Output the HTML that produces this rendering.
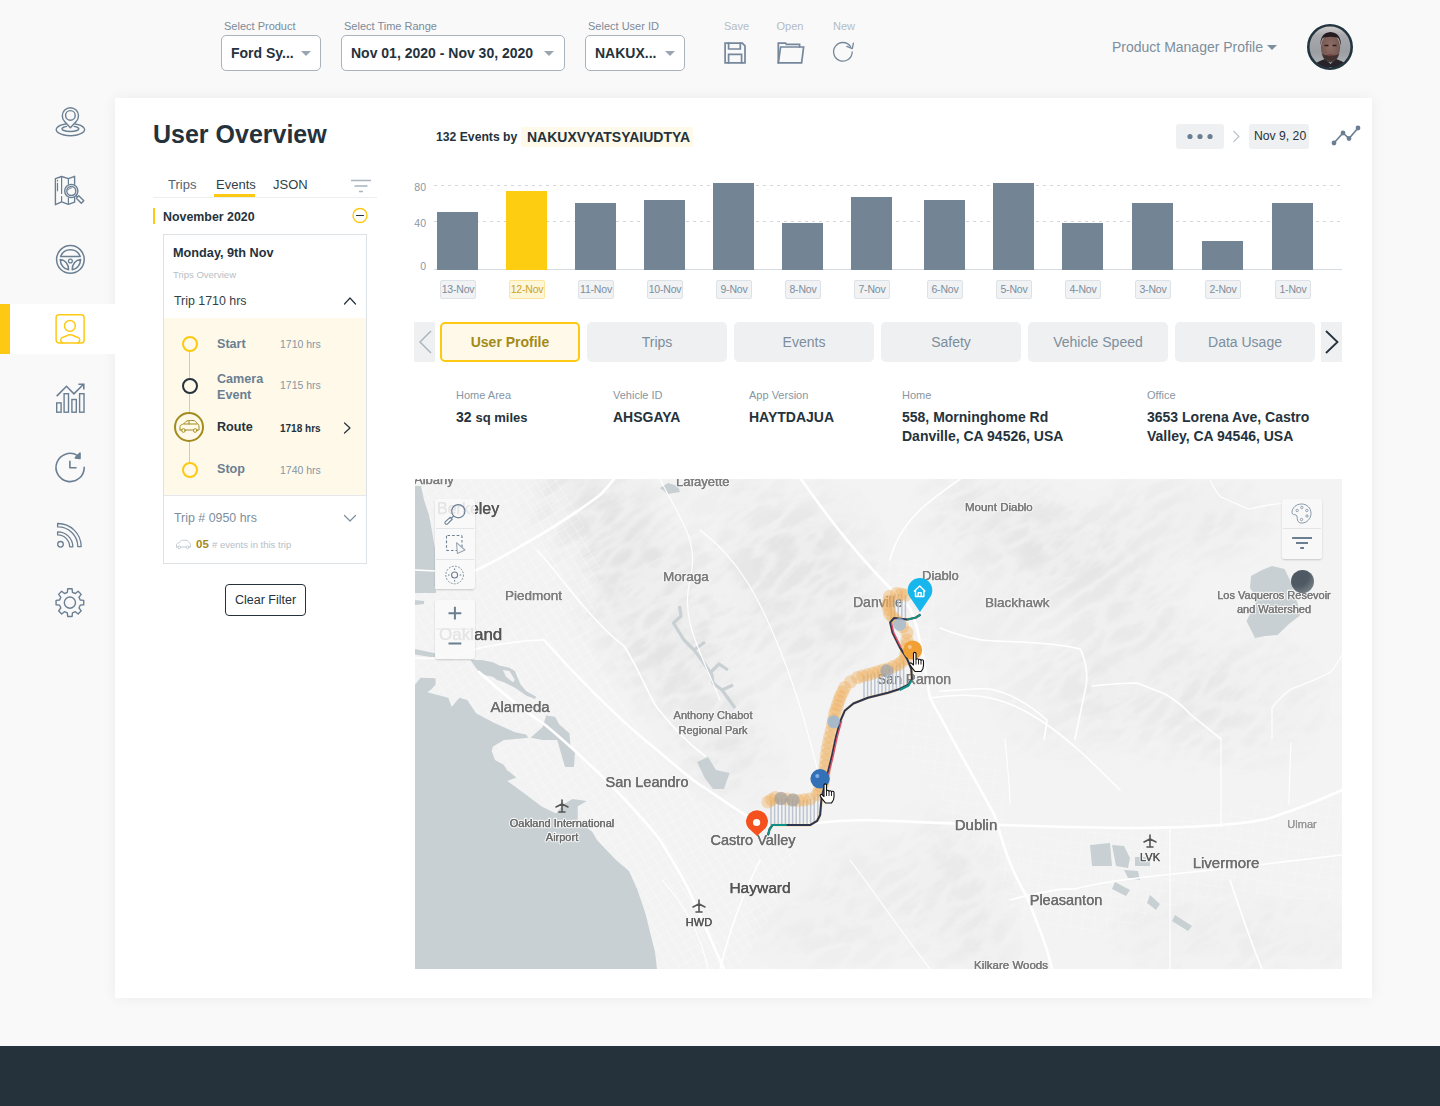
<!DOCTYPE html>
<html><head><meta charset="utf-8">
<style>
*{box-sizing:border-box;margin:0;padding:0}
html,body{width:1440px;height:1106px;overflow:hidden;background:#f9f9f9;font-family:"Liberation Sans",sans-serif;color:#25323c}
.a{position:absolute}
.t{position:absolute;line-height:1;white-space:nowrap}
.b{font-weight:bold}
#card{position:absolute;left:115px;top:98px;width:1257px;height:900px;background:#fff;box-shadow:0 0 14px rgba(0,0,0,0.06)}
#footer{position:absolute;left:0;top:1046px;width:1440px;height:60px;background:#25313b}
.sel{position:absolute;top:35px;height:36px;border:1px solid #a9b3bc;border-radius:5px;background:#fff}
.lbl{font-size:11px;color:#7d8a97}
.caret{position:absolute;width:0;height:0;border-left:5px solid transparent;border-right:5px solid transparent;border-top:5px solid #9aa5b0}
.bar{position:absolute;width:41px;background:#738494}
.xl{position:absolute;top:280px;height:19px;white-space:nowrap;overflow:visible;letter-spacing:-0.2px;border:1px solid #dde2e6;background:#f0f2f4;border-radius:2px;font-size:10.5px;color:#7d8e9c;text-align:center;line-height:17px}
.tab{position:absolute;top:322px;width:140px;height:40px;background:#eef0f2;border-radius:5px;font-size:14px;color:#7d8e9c;text-align:center;line-height:40px}
.il{font-size:11px;color:#8696a4}
.iv{font-size:14px;font-weight:bold;color:#25323c}
.ml{position:absolute;line-height:1;white-space:nowrap;color:#757575;font-family:"Liberation Sans",sans-serif}
</style></head><body>

<!-- HEADER -->
<div class="t lbl" style="left:224px;top:21px">Select Product</div>
<div class="sel" style="left:221px;width:100px"></div>
<div class="t b" style="left:231px;top:46px;font-size:14px">Ford Sy...</div>
<div class="caret" style="left:301px;top:51px"></div>

<div class="t lbl" style="left:344px;top:21px">Select Time Range</div>
<div class="sel" style="left:341px;width:224px"></div>
<div class="t b" style="left:351px;top:46px;font-size:14px">Nov 01, 2020 - Nov 30, 2020</div>
<div class="caret" style="left:544px;top:51px"></div>

<div class="t lbl" style="left:588px;top:21px">Select User ID</div>
<div class="sel" style="left:585px;width:100px"></div>
<div class="t b" style="left:595px;top:46px;font-size:14px">NAKUX...</div>
<div class="caret" style="left:665px;top:51px"></div>

<div class="t lbl" style="left:724px;top:21px;color:#b4bcc4;width:22px;text-align:center">Save</div>
<div class="t lbl" style="left:776px;top:21px;color:#b4bcc4;width:28px;text-align:center">Open</div>
<div class="t lbl" style="left:833px;top:21px;color:#b4bcc4;width:21px;text-align:center">New</div>

<div class="t" style="left:1112px;top:40px;font-size:14px;color:#7d8e9c">Product Manager Profile</div>
<div class="caret" style="left:1267px;top:45px;border-top-color:#7d8e9c"></div>


<svg class="a" style="left:1307px;top:24px" width="46" height="46" viewBox="0 0 46 46">
 <defs><clipPath id="avc"><circle cx="23" cy="23" r="21"/></clipPath>
 <linearGradient id="avbg" x1="0" y1="0" x2="0" y2="1"><stop offset="0" stop-color="#d9d5d2"/><stop offset="0.25" stop-color="#a8a9ad"/><stop offset="0.6" stop-color="#9b9ea3"/><stop offset="1" stop-color="#b5b7ba"/></linearGradient>
 <radialGradient id="avface" cx="0.5" cy="0.45" r="0.6"><stop offset="0" stop-color="#8f6f66"/><stop offset="0.7" stop-color="#7a5c55"/><stop offset="1" stop-color="#5a4440"/></radialGradient></defs>
 <g clip-path="url(#avc)">
  <rect width="46" height="46" fill="url(#avbg)"/>
  <path d="M4,46 L6,41 C10,38 15,36 18,35 L23.5,40 L29,35 C32,36 37,38 41,41 L43,46 Z" fill="#26242a"/>
  <path d="M19,46 L23.5,43 L28,46 Z" fill="#d8d8dc"/>
  <ellipse cx="23.5" cy="23.5" rx="9.6" ry="13" fill="url(#avface)"/>
  <path d="M14.5,29 C16,35 19,38 23.5,38.5 C28,38 31,35 32.5,29 C31,31 29,31.5 27,31 C25,30.5 22,30.5 20,31 C18,31.5 16,31 14.5,29 Z" fill="#3a2a28" opacity="0.85"/>
  <path d="M13.5,22 C13,14 16,8.5 23.5,8 C31,8.5 34.5,14 33.8,22 C33,17 32,14 30,13.5 C26,12.5 21,12.5 17,13.5 C15,14 14,17 13.5,22 Z" fill="#241c1e"/>
  <path d="M17.5,21.5 H21.5 M25.5,21.5 H29.5" stroke="#2a1e1e" stroke-width="1.4"/>
  <path d="M20.5,31.5 C22,30.8 25,30.8 26.5,31.5" stroke="#7a4a48" stroke-width="1.2" fill="none"/>
 </g>
 <circle cx="23" cy="23" r="21.7" fill="none" stroke="#22343e" stroke-width="2.6"/>
</svg>

<!-- SIDEBAR active -->
<div class="a" style="left:0;top:304px;width:116px;height:50px;background:#fff;z-index:2"></div>
<div class="a" style="left:0;top:304px;width:10px;height:50px;background:#fdc912;z-index:2"></div>

<div id="card"></div>
<div id="footer"></div>



<!-- CHART -->
<div class="t b" style="left:436px;top:131px;font-size:12.2px;color:#25323c">132 Events by</div>
<div class="a" style="left:521px;top:127px;width:172px;height:20px;background:#fef9e8;border-radius:2px"></div>
<div class="t b" style="left:527px;top:130px;font-size:14px;color:#25323c">NAKUXVYATSYAIUDTYA</div>
<div class="a" style="left:1176px;top:124px;width:48px;height:25px;background:#eef0f2;border-radius:3px"></div>
<div class="a" style="left:1249px;top:124px;width:60px;height:25px;background:#eef0f2;border-radius:3px"></div>
<div class="t" style="left:1254px;top:130px;font-size:12.2px;color:#25323c">Nov 9, 20</div>
<svg class="a" style="left:0;top:0" width="1440" height="320"><path d="M434,185.5 H1342 M434,221.5 H1342" stroke="#d3d8dc" stroke-width="1" stroke-dasharray="3,4"/><path d="M434,269.5 H1342" stroke="#d6dbe0" stroke-width="1"/><g fill="#6b7f93"><circle cx="1190" cy="136.5" r="2.6"/><circle cx="1200" cy="136.5" r="2.6"/><circle cx="1210" cy="136.5" r="2.6"/></g><path d="M1233.5,131 L1239,136.5 L1233.5,142" stroke="#b9c2c9" stroke-width="1.1" fill="none"/><g stroke="#6b7f93" stroke-width="1.6" fill="#6b7f93"><path d="M1334,143 L1343,133 L1349,138.5 L1358,128" fill="none"/><circle cx="1334" cy="143" r="1.6"/><circle cx="1343" cy="133" r="1.6"/><circle cx="1349" cy="138.5" r="1.6"/><circle cx="1358" cy="128" r="1.6"/></g></svg>
<div class="t" style="left:408px;top:181.5px;width:18px;text-align:right;font-size:10.5px;color:#8a98a6">80</div>
<div class="t" style="left:408px;top:218px;width:18px;text-align:right;font-size:10.5px;color:#8a98a6">40</div>
<div class="t" style="left:408px;top:260.5px;width:18px;text-align:right;font-size:10.5px;color:#8a98a6">0</div>
<div class="bar" style="left:437px;top:212.3px;height:57.69999999999999px;background:#738494"></div>
<div class="xl" style="left:440px;width:36px">13-Nov</div>
<div class="bar" style="left:506px;top:191px;height:79px;background:#fdcd12"></div>
<div class="xl" style="left:509px;width:36px;background:#fef6d8;border-color:#fde59a;color:#c9a52a">12-Nov</div>
<div class="bar" style="left:575px;top:202.5px;height:67.5px;background:#738494"></div>
<div class="xl" style="left:578px;width:36px">11-Nov</div>
<div class="bar" style="left:644px;top:199.8px;height:70.19999999999999px;background:#738494"></div>
<div class="xl" style="left:647px;width:36px">10-Nov</div>
<div class="bar" style="left:713px;top:182.9px;height:87.1px;background:#738494"></div>
<div class="xl" style="left:716px;width:36px">9-Nov</div>
<div class="bar" style="left:782px;top:222.7px;height:47.30000000000001px;background:#738494"></div>
<div class="xl" style="left:785px;width:36px">8-Nov</div>
<div class="bar" style="left:851px;top:197.2px;height:72.80000000000001px;background:#738494"></div>
<div class="xl" style="left:854px;width:36px">7-Nov</div>
<div class="bar" style="left:924px;top:200px;height:70px;background:#738494"></div>
<div class="xl" style="left:927px;width:36px">6-Nov</div>
<div class="bar" style="left:993px;top:183.1px;height:86.9px;background:#738494"></div>
<div class="xl" style="left:996px;width:36px">5-Nov</div>
<div class="bar" style="left:1062px;top:222.9px;height:47.099999999999994px;background:#738494"></div>
<div class="xl" style="left:1065px;width:36px">4-Nov</div>
<div class="bar" style="left:1132px;top:202.8px;height:67.19999999999999px;background:#738494"></div>
<div class="xl" style="left:1135px;width:36px">3-Nov</div>
<div class="bar" style="left:1202px;top:241px;height:29px;background:#738494"></div>
<div class="xl" style="left:1205px;width:36px">2-Nov</div>
<div class="bar" style="left:1272px;top:202.8px;height:67.19999999999999px;background:#738494"></div>
<div class="xl" style="left:1275px;width:36px">1-Nov</div>
<!-- TABS -->
<div class="a" style="left:414px;top:322px;width:21px;height:40px;background:#eef0f2"></div>
<div class="a" style="left:1321px;top:322px;width:21px;height:40px;background:#eef0f2"></div>
<div class="tab b" style="left:440px;background:#fef9e8;border:2px solid #fdc912;line-height:36px;color:#a38a1a">User Profile</div>
<div class="tab" style="left:587px">Trips</div>
<div class="tab" style="left:734px">Events</div>
<div class="tab" style="left:881px">Safety</div>
<div class="tab" style="left:1028px">Vehicle Speed</div>
<div class="tab" style="left:1175px">Data Usage</div>
<svg class="a" style="left:0;top:0" width="1440" height="400" fill="none"><path d="M431,331 L420,342 L431,353" stroke="#aab5be" stroke-width="1.5"/><path d="M1326,331 L1337.5,342 L1326,353" stroke="#25323c" stroke-width="1.8"/></svg>
<!-- INFO -->
<div class="t il" style="left:456px;top:390px">Home Area</div>
<div class="t iv" style="left:456px;top:408px;line-height:19px">32 <span style="font-size:13px">sq miles</span></div>
<div class="t il" style="left:613px;top:390px">Vehicle ID</div>
<div class="t iv" style="left:613px;top:408px;line-height:19px">AHSGAYA</div>
<div class="t il" style="left:749px;top:390px">App Version</div>
<div class="t iv" style="left:749px;top:408px;line-height:19px">HAYTDAJUA</div>
<div class="t il" style="left:902px;top:390px">Home</div>
<div class="t iv" style="left:902px;top:408px;line-height:19px">558, Morninghome Rd<br>Danville, CA 94526, USA</div>
<div class="t il" style="left:1147px;top:390px">Office</div>
<div class="t iv" style="left:1147px;top:408px;line-height:19px">3653 Lorena Ave, Castro<br>Valley, CA 94546, USA</div>
<svg class="a" style="left:415px;top:479px" width="927" height="490" viewBox="415 479 927 490">
<defs><filter id="bl" x="-50%" y="-50%" width="200%" height="200%"><feGaussianBlur stdDeviation="18"/></filter><filter id="tex" x="0" y="0" width="100%" height="100%"><feTurbulence type="turbulence" baseFrequency="0.025 0.06" numOctaves="3" seed="11" result="n"/><feColorMatrix in="n" type="matrix" values="0 0 0 0 0  0 0 0 0 0  0 0 0 0 0  0 0 0 2.6 -0.35"/></filter><mask id="hm"><rect x="415" y="479" width="927" height="490" fill="#000"/><g filter="url(#bl)"><ellipse cx="600" cy="520" rx="84.0" ry="48.0" transform="rotate(35 600 520)" fill="#fff" opacity="0.63"/><ellipse cx="650" cy="600" rx="72.0" ry="108.0" transform="rotate(-30 650 600)" fill="#fff" opacity="0.72"/><ellipse cx="700" cy="690" rx="60.0" ry="84.0" transform="rotate(-30 700 690)" fill="#fff" opacity="0.54"/><ellipse cx="735" cy="760" rx="48.0" ry="48.0" transform="rotate(0 735 760)" fill="#fff" opacity="0.45"/><ellipse cx="800" cy="600" rx="72.0" ry="96.0" transform="rotate(-35 800 600)" fill="#fff" opacity="0.63"/><ellipse cx="830" cy="540" rx="48.0" ry="60.0" transform="rotate(-35 830 540)" fill="#fff" opacity="0.45"/><ellipse cx="760" cy="540" rx="60.0" ry="60.0" transform="rotate(0 760 540)" fill="#fff" opacity="0.36"/><ellipse cx="1020" cy="530" rx="108.0" ry="54.0" transform="rotate(20 1020 530)" fill="#fff" opacity="0.63"/><ellipse cx="1100" cy="580" rx="96.0" ry="48.0" transform="rotate(25 1100 580)" fill="#fff" opacity="0.54"/><ellipse cx="1180" cy="520" rx="96.0" ry="48.0" transform="rotate(0 1180 520)" fill="#fff" opacity="0.45"/><ellipse cx="980" cy="620" rx="72.0" ry="48.0" transform="rotate(0 980 620)" fill="#fff" opacity="0.27"/><ellipse cx="1150" cy="680" rx="108.0" ry="72.0" transform="rotate(20 1150 680)" fill="#fff" opacity="0.45"/><ellipse cx="1250" cy="700" rx="84.0" ry="72.0" transform="rotate(0 1250 700)" fill="#fff" opacity="0.36"/><ellipse cx="1060" cy="700" rx="72.0" ry="60.0" transform="rotate(0 1060 700)" fill="#fff" opacity="0.32"/><ellipse cx="960" cy="900" rx="48.0" ry="96.0" transform="rotate(-20 960 900)" fill="#fff" opacity="0.54"/><ellipse cx="870" cy="900" rx="60.0" ry="72.0" transform="rotate(0 870 900)" fill="#fff" opacity="0.36"/><ellipse cx="800" cy="930" rx="48.0" ry="48.0" transform="rotate(0 800 930)" fill="#fff" opacity="0.32"/><ellipse cx="1200" cy="930" rx="96.0" ry="48.0" transform="rotate(0 1200 930)" fill="#fff" opacity="0.32"/><ellipse cx="1300" cy="940" rx="72.0" ry="36.0" transform="rotate(0 1300 940)" fill="#fff" opacity="0.27"/><ellipse cx="590" cy="480" rx="60.0" ry="24.0" transform="rotate(0 590 480)" fill="#fff" opacity="0.45"/><ellipse cx="720" cy="480" rx="72.0" ry="24.0" transform="rotate(0 720 480)" fill="#fff" opacity="0.36"/></g></mask><pattern id="grid" width="9" height="9" patternUnits="userSpaceOnUse" patternTransform="rotate(-32)"><path d="M0,0 H9 M0,0 V9" stroke="#fff" stroke-width="1.2"/></pattern><pattern id="grid2" width="12" height="12" patternUnits="userSpaceOnUse" patternTransform="rotate(8)"><path d="M0,0 H12 M0,0 V12" stroke="#fff" stroke-width="1"/></pattern></defs>
<rect x="415" y="479" width="927" height="490" fill="#f3f3f3"/>
<g filter="url(#bl)">
<ellipse cx="600" cy="520" rx="70" ry="40" transform="rotate(35 600 520)" fill="#000" opacity="0.014"/>
<ellipse cx="650" cy="600" rx="60" ry="90" transform="rotate(-30 650 600)" fill="#000" opacity="0.016"/>
<ellipse cx="700" cy="690" rx="50" ry="70" transform="rotate(-30 700 690)" fill="#000" opacity="0.012"/>
<ellipse cx="735" cy="760" rx="40" ry="40" transform="rotate(0 735 760)" fill="#000" opacity="0.010"/>
<ellipse cx="800" cy="600" rx="60" ry="80" transform="rotate(-35 800 600)" fill="#000" opacity="0.014"/>
<ellipse cx="830" cy="540" rx="40" ry="50" transform="rotate(-35 830 540)" fill="#000" opacity="0.010"/>
<ellipse cx="760" cy="540" rx="50" ry="50" transform="rotate(0 760 540)" fill="#000" opacity="0.008"/>
<ellipse cx="1020" cy="530" rx="90" ry="45" transform="rotate(20 1020 530)" fill="#000" opacity="0.014"/>
<ellipse cx="1100" cy="580" rx="80" ry="40" transform="rotate(25 1100 580)" fill="#000" opacity="0.012"/>
<ellipse cx="1180" cy="520" rx="80" ry="40" transform="rotate(0 1180 520)" fill="#000" opacity="0.010"/>
<ellipse cx="980" cy="620" rx="60" ry="40" transform="rotate(0 980 620)" fill="#000" opacity="0.006"/>
<ellipse cx="1150" cy="680" rx="90" ry="60" transform="rotate(20 1150 680)" fill="#000" opacity="0.010"/>
<ellipse cx="1250" cy="700" rx="70" ry="60" transform="rotate(0 1250 700)" fill="#000" opacity="0.008"/>
<ellipse cx="1060" cy="700" rx="60" ry="50" transform="rotate(0 1060 700)" fill="#000" opacity="0.007"/>
<ellipse cx="960" cy="900" rx="40" ry="80" transform="rotate(-20 960 900)" fill="#000" opacity="0.012"/>
<ellipse cx="870" cy="900" rx="50" ry="60" transform="rotate(0 870 900)" fill="#000" opacity="0.008"/>
<ellipse cx="800" cy="930" rx="40" ry="40" transform="rotate(0 800 930)" fill="#000" opacity="0.007"/>
<ellipse cx="1200" cy="930" rx="80" ry="40" transform="rotate(0 1200 930)" fill="#000" opacity="0.007"/>
<ellipse cx="1300" cy="940" rx="60" ry="30" transform="rotate(0 1300 940)" fill="#000" opacity="0.006"/>
<ellipse cx="590" cy="480" rx="50" ry="20" transform="rotate(0 590 480)" fill="#000" opacity="0.010"/>
<ellipse cx="720" cy="480" rx="60" ry="20" transform="rotate(0 720 480)" fill="#000" opacity="0.008"/>
</g>
<g mask="url(#hm)" opacity="0.045"><g transform="rotate(-35 878 724)"><rect x="250" y="150" width="1260" height="1150" filter="url(#tex)"/></g></g>
<path d="M415.0,479.0 L560.0,479.0 L600.0,560.0 L590.0,640.0 L620.0,700.0 L660.0,760.0 L700.0,800.0 L760.0,820.0 L800.0,850.0 L780.0,900.0 L740.0,969.0 L657.0,969.0 L640.0,900.0 L600.0,850.0 L540.0,800.0 L480.0,740.0 L415.0,690.0Z" fill="url(#grid)" opacity="0.55"/>
<path d="M870.0,560.0 L930.0,560.0 L940.0,640.0 L930.0,690.0 L1000.0,760.0 L1010.0,840.0 L1100.0,830.0 L1342.0,790.0 L1342.0,900.0 L1200.0,900.0 L1100.0,940.0 L1020.0,930.0 L990.0,860.0 L920.0,780.0 L880.0,720.0 L900.0,640.0Z" fill="url(#grid2)" opacity="0.45"/>
<path d="M415.0,684.4 L420.6,677.8 L435.6,678.3 L435.6,684.4 L431.7,688.9 L427.2,692.2 L448.3,697.8 L451.7,706.7 L459.4,697.8 L467.2,700.0 L476.1,713.3 L492.8,722.2 L515.0,732.2 L526.1,734.4 L528.3,737.8 L503.9,740.0 L492.8,746.7 L491.7,751.1 L495.0,760.0 L503.6,764.8 L507.2,770.2 L516.3,777.4 L507.2,781.0 L512.6,784.7 L527.1,795.5 L541.6,806.4 L556.0,813.6 L563.3,804.6 L572.3,799.1 L586.8,801.0 L577.7,806.4 L577.7,820.8 L592.2,831.7 L597.0,840.0 L616.0,860.0 L629.0,871.0 L637.5,890.0 L645.6,914.0 L651.0,936.0 L655.0,952.0 L657.0,969.0 L415.0,969.0Z" fill="#c8d0d3"/>
<path d="M470.6,660.0 L481.7,660.0 L492.8,662.2 L499.4,665.6 L509.4,667.8 L515.0,671.1 L517.2,676.7 L520.6,684.4 L526.1,691.1 L536.1,696.7 L535.0,698.9 L526.1,695.6 L515.0,687.8 L503.9,682.2 L497.2,680.0 L492.8,676.7 L486.1,675.6 L479.4,672.2 L475.0,666.7Z" fill="#c8d0d3"/>
<path d="M415.0,648.9 L435.0,653.3 L435.0,657.8 L415.0,654.4Z" fill="#c8d0d3"/>
<path d="M546.1,715.6 L555.0,716.7 L559.4,724.4 L569.4,733.3 L570.6,746.7 L575.0,751.1 L574.0,767.0 L565.0,767.0 L557.2,740.0 L542.8,740.0 L530.6,737.8 L542.8,726.7Z" fill="#c8d0d3"/>
<path d="M415.0,486.0 L421.0,486.0 L424.0,500.0 L429.0,515.0 L432.0,531.0 L435.0,549.0 L436.0,562.0 L436.0,571.0 L436.0,593.0 L415.0,593.0Z" fill="#c8d0d3"/>
<path d="M415.0,600.0 L424.0,601.0 L424.0,604.0 L415.0,605.0Z" fill="#c8d0d3"/>
<path d="M502.8,670.0 L509.4,671.1 L515.0,680.0 L512.8,682.2 L506.1,676.7Z" fill="#f2f2f2"/>
<path d="M679.5,606 L681,616 L673.5,623 L684,640 L694,650 L701,659 L712,675 L713,683 L722,690 L730,701 L735,708 M694,650 L705,642 M710,673 L719,664 L728,670 M722,690 L733,685" fill="none" stroke="#c8d0d3" stroke-width="3.2" stroke-linejoin="round"/><path d="M697,762 L708,757 L716,770 L729.6,773 L724,789 L713,789 L705,778.5 Z" fill="#c8d0d3"/><path d="M660,488 L668,483 L678,486 L680,492 L668,494 Z" fill="#c8d0d3"/><path d="M1251.0,576.0 L1262.0,570.0 L1272.0,566.0 L1284.5,569.0 L1290.0,580.0 L1294.0,593.0 L1298.0,605.0 L1300.0,615.6 L1289.0,624.0 L1277.5,635.0 L1265.0,636.0 L1255.0,638.0 L1251.0,630.0 L1246.5,621.0 L1252.0,610.0 L1257.8,599.0 L1250.0,588.0Z" fill="#c8d0d3"/><path d="M1090,845 L1110,843 L1112,866 L1092,866 Z M1112,845 L1124,846 L1130,858 L1128,868 L1116,866 Z M1124,870 L1138,871 L1140,880 L1128,878 Z M1115,882 L1130,890 L1126,896 L1112,889 Z M1150,895 L1160,904 L1156,910 L1147,903 Z M1175,915 L1192,926 L1188,931 L1172,921 Z M1135,857 L1150,857 L1150,866 L1135,866 Z" fill="#c8d0d3"/>
<g fill="none" stroke="#fff" stroke-linecap="round">
<path d="M801,479 C830,520 860,560 910,608 C920,630 925,670 930,698 C950,735 975,780 994,814 C1000,830 1005,860 1027,897 C1040,930 1048,950 1052,969" stroke-width="2.6"/>
<path d="M770,826 C800,826 830,820 866,820 C920,822 1000,826 1123,828 C1180,828 1240,826 1270,818 C1300,808 1325,798 1342,790" stroke-width="2.6"/>
<path d="M479,672 C510,700 530,715 544,724 C570,745 590,765 608,782 C630,805 645,820 660,840 C675,865 685,880 692,897 C705,925 715,950 724,969" stroke-width="2.6"/>
<path d="M544,640 C580,680 610,710 640,736 C670,760 690,780 705,788 C730,805 750,820 770,826" stroke-width="2.6"/>
<path d="M436,588 C460,578 495,562 521,546 C550,530 580,510 600,495 C606,489 610,484 614,479" stroke-width="2.6"/>
<path d="M1010,900 C1040,892 1060,888 1075,889 C1100,882 1140,877 1193,872 C1250,866 1300,860 1342,855" stroke-width="1.6"/>
<path d="M537,550 C560,575 590,620 624,646 C640,670 650,700 659,710 C675,730 690,745 705,756" stroke-width="1.6"/>
<path d="M415,570 L436,571" stroke-width="1.6"/>
<path d="M415,658 C440,660 460,655 480,648 C520,640 540,640 544,640" stroke-width="1.6"/>
<path d="M890,560 C900,520 930,500 960,479" stroke-width="1.6"/>
<path d="M940,628 C960,636 980,641 996,641 C1030,642 1060,644 1080,649 C1086,660 1088,675 1086,686 C1082,705 1078,725 1075,739" stroke-width="1.6"/>
<path d="M940,691 C960,690 980,688 990,689 C1010,693 1030,705 1047,720 C1046,728 1045,735 1044,739 M1092,686 C1110,684 1125,683 1137,683 C1150,688 1160,692 1165,694 C1175,700 1185,708 1190,714 C1200,722 1212,732 1221,739" stroke-width="1.6"/>
<path d="M760,860 C740,900 730,930 720,969" stroke-width="1.6"/>
<path d="M1230,880 C1240,910 1250,940 1262,969" stroke-width="1.6"/>
<path d="M930,698 C980,690 1010,700 1040,720 C1070,740 1090,760 1120,790" stroke-width="1.6"/>
<path d="M660,479 C680,520 700,540 690,580 C680,620 700,650 720,700" stroke-width="1.1"/>
<path d="M700,530 C740,560 760,600 780,650 C800,700 810,740 820,780" stroke-width="1.1"/>
<path d="M1210,480 C1215,490 1218,495 1221,497 C1235,503 1245,508 1249,509 C1265,505 1280,503 1291,503 C1300,503 1310,503 1317,503" stroke-width="1.1"/>
<path d="M1342,655 C1338,662 1334,668 1331,672 C1315,680 1300,686 1291,689 C1282,696 1276,702 1272,708 C1272,720 1272,730 1272,739" stroke-width="1.1"/>
<path d="M1221,739 C1221,770 1221,800 1221,827 M1170,827 C1170,870 1170,920 1170,969 M1005,739 C1008,770 1010,790 1010,804" stroke-width="1.1"/>
<path d="M662,880 C680,900 700,930 708,969" stroke-width="1.1"/>
<path d="M850,860 C880,900 900,930 930,969" stroke-width="1.1"/>
<path d="M1291,743 C1290,770 1289,790 1289,804" stroke-width="1.1"/>
</g>
<g font-family="Liberation Sans, sans-serif" stroke="#f4f4f4" stroke-width="2.5" paint-order="stroke" stroke-linejoin="round">
<text x="414" y="484" font-size="13" fill="#7d7d7d" text-anchor="start">Albany</text>
<text x="676" y="486" font-size="13" fill="#7d7d7d" text-anchor="start">Lafayette</text>
<text x="437" y="514" font-size="16" fill="#555" text-anchor="start">Berkeley</text>
<text x="965" y="511" font-size="11.5" fill="#7a7a7a" text-anchor="start">Mount Diablo</text>
<text x="663" y="581" font-size="13.5" fill="#7d7d7d" text-anchor="start">Moraga</text>
<text x="922" y="580" font-size="13" fill="#7d7d7d" text-anchor="start">Diablo</text>
<text x="505" y="600" font-size="13.5" fill="#7d7d7d" text-anchor="start">Piedmont</text>
<text x="853" y="607" font-size="14" fill="#7d7d7d" text-anchor="start">Danville</text>
<text x="985" y="607" font-size="13.5" fill="#7d7d7d" text-anchor="start">Blackhawk</text>
<text x="439" y="640" font-size="17" fill="#555" text-anchor="start">Oakland</text>
<text x="1274" y="599" font-size="11" fill="#7a7a7a" text-anchor="middle">Los Vaqueros Resevoir</text>
<text x="1274" y="613" font-size="11" fill="#7a7a7a" text-anchor="middle">and Watershed</text>
<text x="914" y="684" font-size="14" fill="#7d7d7d" text-anchor="middle">San Ramon</text>
<text x="520" y="712" font-size="15" fill="#6e6e6e" text-anchor="middle">Alameda</text>
<text x="713" y="719" font-size="11" fill="#7a7a7a" text-anchor="middle">Anthony Chabot</text>
<text x="713" y="734" font-size="11" fill="#7a7a7a" text-anchor="middle">Regional Park</text>
<text x="647" y="787" font-size="14.5" fill="#6e6e6e" text-anchor="middle">San Leandro</text>
<text x="562" y="827" font-size="11" fill="#6e6e6e" text-anchor="middle">Oakland International</text>
<text x="562" y="841" font-size="11" fill="#6e6e6e" text-anchor="middle">Airport</text>
<text x="753" y="845" font-size="14.5" fill="#6e6e6e" text-anchor="middle">Castro Valley</text>
<text x="976" y="830" font-size="15" fill="#6e6e6e" text-anchor="middle">Dublin</text>
<text x="1302" y="828" font-size="11" fill="#9a9a9a" text-anchor="middle">Ulmar</text>
<text x="1150" y="861" font-size="11" fill="#555" text-anchor="middle">LVK</text>
<text x="1226" y="868" font-size="15" fill="#6e6e6e" text-anchor="middle">Livermore</text>
<text x="760" y="893" font-size="15.5" fill="#555" text-anchor="middle">Hayward</text>
<text x="1066" y="905" font-size="14.5" fill="#6e6e6e" text-anchor="middle">Pleasanton</text>
<text x="699" y="926" font-size="11" fill="#555" text-anchor="middle">HWD</text>
<text x="1011" y="969" font-size="11.5" fill="#7a7a7a" text-anchor="middle">Kilkare Woods</text>
</g>
<g font-family="Liberation Sans, sans-serif" stroke-width="0.25">
<text x="414" y="484" font-size="13" fill="#7d7d7d" stroke="#7d7d7d" text-anchor="start">Albany</text>
<text x="676" y="486" font-size="13" fill="#7d7d7d" stroke="#7d7d7d" text-anchor="start">Lafayette</text>
<text x="437" y="514" font-size="16" fill="#555" stroke="#555" text-anchor="start">Berkeley</text>
<text x="965" y="511" font-size="11.5" fill="#7a7a7a" stroke="#7a7a7a" text-anchor="start">Mount Diablo</text>
<text x="663" y="581" font-size="13.5" fill="#7d7d7d" stroke="#7d7d7d" text-anchor="start">Moraga</text>
<text x="922" y="580" font-size="13" fill="#7d7d7d" stroke="#7d7d7d" text-anchor="start">Diablo</text>
<text x="505" y="600" font-size="13.5" fill="#7d7d7d" stroke="#7d7d7d" text-anchor="start">Piedmont</text>
<text x="853" y="607" font-size="14" fill="#7d7d7d" stroke="#7d7d7d" text-anchor="start">Danville</text>
<text x="985" y="607" font-size="13.5" fill="#7d7d7d" stroke="#7d7d7d" text-anchor="start">Blackhawk</text>
<text x="439" y="640" font-size="17" fill="#555" stroke="#555" text-anchor="start">Oakland</text>
<text x="1274" y="599" font-size="11" fill="#7a7a7a" stroke="#7a7a7a" text-anchor="middle">Los Vaqueros Resevoir</text>
<text x="1274" y="613" font-size="11" fill="#7a7a7a" stroke="#7a7a7a" text-anchor="middle">and Watershed</text>
<text x="914" y="684" font-size="14" fill="#7d7d7d" stroke="#7d7d7d" text-anchor="middle">San Ramon</text>
<text x="520" y="712" font-size="15" fill="#6e6e6e" stroke="#6e6e6e" text-anchor="middle">Alameda</text>
<text x="713" y="719" font-size="11" fill="#7a7a7a" stroke="#7a7a7a" text-anchor="middle">Anthony Chabot</text>
<text x="713" y="734" font-size="11" fill="#7a7a7a" stroke="#7a7a7a" text-anchor="middle">Regional Park</text>
<text x="647" y="787" font-size="14.5" fill="#6e6e6e" stroke="#6e6e6e" text-anchor="middle">San Leandro</text>
<text x="562" y="827" font-size="11" fill="#6e6e6e" stroke="#6e6e6e" text-anchor="middle">Oakland International</text>
<text x="562" y="841" font-size="11" fill="#6e6e6e" stroke="#6e6e6e" text-anchor="middle">Airport</text>
<text x="753" y="845" font-size="14.5" fill="#6e6e6e" stroke="#6e6e6e" text-anchor="middle">Castro Valley</text>
<text x="976" y="830" font-size="15" fill="#6e6e6e" stroke="#6e6e6e" text-anchor="middle">Dublin</text>
<text x="1302" y="828" font-size="11" fill="#9a9a9a" stroke="#9a9a9a" text-anchor="middle">Ulmar</text>
<text x="1150" y="861" font-size="11" fill="#555" stroke="#555" text-anchor="middle">LVK</text>
<text x="1226" y="868" font-size="15" fill="#6e6e6e" stroke="#6e6e6e" text-anchor="middle">Livermore</text>
<text x="760" y="893" font-size="15.5" fill="#555" stroke="#555" text-anchor="middle">Hayward</text>
<text x="1066" y="905" font-size="14.5" fill="#6e6e6e" stroke="#6e6e6e" text-anchor="middle">Pleasanton</text>
<text x="699" y="926" font-size="11" fill="#555" stroke="#555" text-anchor="middle">HWD</text>
<text x="1011" y="969" font-size="11.5" fill="#7a7a7a" stroke="#7a7a7a" text-anchor="middle">Kilkare Woods</text>
</g>
<path d="M562,800 L562,812 M556,807 L562,804 L568,807 M559,812 L565,812" stroke="#555" stroke-width="1.6" fill="none" stroke-linecap="round"/>
<path d="M699,900 L699,912 M693,907 L699,904 L705,907 M696,912 L702,912" stroke="#555" stroke-width="1.6" fill="none" stroke-linecap="round"/>
<path d="M1150,835 L1150,847 M1144,842 L1150,839 L1156,842 M1147,847 L1153,847" stroke="#555" stroke-width="1.6" fill="none" stroke-linecap="round"/>
</svg>
<svg class="a" style="left:415px;top:479px" width="927" height="490" viewBox="415 479 927 490">
<path d="M771.0,800.2 V827.2 M774.6,798.0 V825.1 M778.2,798.0 V825.1 M781.8,798.4 V825.1 M785.4,798.8 V825.1 M789.0,799.3 V825.1 M792.6,799.8 V825.1 M796.2,800.2 V825.1 M799.8,800.3 V825.1 M803.4,799.9 V825.1 M807.0,799.4 V825.1 M810.6,798.6 V824.7 M814.2,796.5 V822.6 M817.8,793.5 V819.6 M864.0,675.7 V699.3 M867.6,674.7 V697.8 M871.2,673.7 V696.9 M874.8,672.6 V696.0 M878.4,671.6 V695.2 M882.0,670.6 V694.3 M885.6,669.5 V693.4 M889.2,668.3 V692.4 M892.8,666.8 V691.3 M896.4,665.3 V690.1 M900.0,663.1 V688.9 M903.6,660.2 V687.1 M891.0,595.8 V621.5 M894.6,594.4 V618.2 M898.2,593.7 V618.6 M901.8,594.4 V619.0 M905.4,595.0 V619.4" stroke="#b5bfcc" stroke-width="1.5" opacity="0.9"/>
<g fill="#efaa55" fill-opacity="0.38">
<circle cx="768.0" cy="802.0" r="6.6"/>
<circle cx="771.6" cy="799.8" r="6.6"/>
<circle cx="775.3" cy="797.6" r="6.6"/>
<circle cx="781.0" cy="798.3" r="6.6"/>
<circle cx="786.8" cy="799.0" r="6.6"/>
<circle cx="792.6" cy="799.8" r="6.6"/>
<circle cx="798.4" cy="800.5" r="6.6"/>
<circle cx="804.2" cy="799.8" r="6.6"/>
<circle cx="810.0" cy="799.0" r="6.6"/>
<circle cx="817.2" cy="794.7" r="6.6"/>
<circle cx="819.1" cy="790.8" r="6.6"/>
<circle cx="821.1" cy="786.9" r="6.6"/>
<circle cx="823.0" cy="783.0" r="6.6"/>
<circle cx="823.8" cy="777.2" r="6.6"/>
<circle cx="824.5" cy="771.5" r="6.6"/>
<circle cx="825.2" cy="765.8" r="6.6"/>
<circle cx="825.9" cy="760.0" r="6.6"/>
<circle cx="826.6" cy="754.2" r="6.6"/>
<circle cx="827.4" cy="748.4" r="6.6"/>
<circle cx="828.5" cy="742.6" r="6.6"/>
<circle cx="829.7" cy="736.8" r="6.6"/>
<circle cx="831.2" cy="731.0" r="6.6"/>
<circle cx="832.6" cy="725.2" r="6.6"/>
<circle cx="833.6" cy="719.5" r="6.6"/>
<circle cx="834.6" cy="713.7" r="6.6"/>
<circle cx="836.0" cy="709.4" r="6.6"/>
<circle cx="837.5" cy="705.0" r="6.6"/>
<circle cx="839.0" cy="700.6" r="6.6"/>
<circle cx="840.4" cy="696.3" r="6.6"/>
<circle cx="842.5" cy="692.0" r="6.6"/>
<circle cx="844.7" cy="687.6" r="6.6"/>
<circle cx="850.5" cy="681.8" r="6.6"/>
<circle cx="857.7" cy="677.5" r="6.6"/>
<circle cx="862.8" cy="676.0" r="6.6"/>
<circle cx="867.9" cy="674.6" r="6.6"/>
<circle cx="873.0" cy="673.2" r="6.6"/>
<circle cx="878.0" cy="671.7" r="6.6"/>
<circle cx="883.0" cy="670.2" r="6.6"/>
<circle cx="888.1" cy="668.8" r="6.6"/>
<circle cx="893.2" cy="666.6" r="6.6"/>
<circle cx="898.3" cy="664.5" r="6.6"/>
<circle cx="901.9" cy="661.6" r="6.6"/>
<circle cx="905.5" cy="658.7" r="6.6"/>
<circle cx="905.9" cy="654.0" r="6.6"/>
<circle cx="906.2" cy="649.4" r="6.6"/>
<circle cx="906.6" cy="644.7" r="6.6"/>
<circle cx="907.0" cy="640.0" r="6.6"/>
<circle cx="907.0" cy="632.6" r="6.6"/>
<circle cx="902.6" cy="626.8" r="6.6"/>
<circle cx="899.4" cy="623.5" r="6.6"/>
<circle cx="896.1" cy="620.3" r="6.6"/>
<circle cx="892.9" cy="617.0" r="6.6"/>
<circle cx="889.6" cy="613.8" r="6.6"/>
<circle cx="888.9" cy="609.5" r="6.6"/>
<circle cx="888.1" cy="605.1" r="6.6"/>
<circle cx="888.9" cy="600.8" r="6.6"/>
<circle cx="889.6" cy="596.4" r="6.6"/>
<circle cx="896.8" cy="593.5" r="6.6"/>
<circle cx="901.1" cy="594.2" r="6.6"/>
<circle cx="905.5" cy="595.0" r="6.6"/>
</g>
<path d="M920.5,614.7 L915.6,617.6 L907.0,619.6 L893.9,618.1 L890.2,622.5 L892.5,632.6 L899.7,647.1 L907.0,658.7 L911.3,668.8 L911.9,678.9 L908.4,684.7 L899.7,689.0 L888.1,692.8 L867.9,697.7 L853.4,703.5 L844.7,710.8 L840.4,720.9 L836.0,736.8 L831.7,757.1 L825.9,780.2 L821.6,797.6 L820.1,815.0 L817.2,820.8 L810.0,825.1 L786.8,825.1 L772.4,825.1 L769.5,829.4 L768.0,835.2" fill="none" stroke="#f6c080" stroke-width="2.8" stroke-linejoin="round" opacity="0.7"/>
<path d="M920.5,614.7 L915.6,617.6 L907.0,619.6 L893.9,618.1 L890.2,622.5 L892.5,632.6 L899.7,647.1 L907.0,658.7 L911.3,668.8 L911.9,678.9 L908.4,684.7 L899.7,689.0 L888.1,692.8 L867.9,697.7 L853.4,703.5 L844.7,710.8 L840.4,720.9 L836.0,736.8 L831.7,757.1 L825.9,780.2 L821.6,797.6 L820.1,815.0 L817.2,820.8 L810.0,825.1 L786.8,825.1 L772.4,825.1 L769.5,829.4 L768.0,835.2" fill="none" stroke="#2b3650" stroke-width="2" stroke-linejoin="round"/>
<path d="M890.2,622.5 L892.5,632.6 L899.7,647.1" fill="none" stroke="#e0506a" stroke-width="1.4" transform="translate(1.2,0)"/>
<path d="M840.4,720.9 L836.0,736.8 L831.7,757.1 L825.9,780.2 L821.6,797.6" fill="none" stroke="#e0506a" stroke-width="1.4" transform="translate(1.3,0)"/>
<path d="M786.8,825.1 L772.4,825.1 L769.5,829.4 L768.0,835.2" fill="none" stroke="#0f8f8a" stroke-width="2"/>
<path d="M920.5,614.7 L915.6,617.6 L907.0,619.6" fill="none" stroke="#0f8f8a" stroke-width="2"/>
<path d="M911.9,678.9 L908.4,684.7 L899.7,689.0" fill="none" stroke="#0f8f8a" stroke-width="2" transform="translate(0,1)"/>
<circle cx="781" cy="798.5" r="6.6" fill="#8a9aae" opacity="0.55"/>
<circle cx="793" cy="800" r="6.6" fill="#8a9aae" opacity="0.55"/>
<circle cx="886.7" cy="670.8" r="6.5" fill="#8ea2b8" opacity="0.6"/>
<circle cx="833.7" cy="721.8" r="6.5" fill="#8fb4dc" opacity="0.75"/>
<circle cx="899.7" cy="624.5" r="6.5" fill="#9cbde0" opacity="0.75"/>
<circle cx="820.1" cy="778.8" r="9.7" fill="#3470b5"/>
<circle cx="817.3" cy="776" r="2" fill="#7fb0e6"/>
<circle cx="912.7" cy="650" r="9.5" fill="#f0a035"/>
<circle cx="909.8" cy="647" r="2" fill="#f7c88e"/>
<path d="M920,612 L910.5,598 A12.3,12.3 0 1 1 929.5,598 Z" fill="#17b6ec"/>
<path d="M914,591.5 L919.7,586 L925.4,591.5 M915.5,590 V596.5 H923.9 V590 M918.2,596.5 V592.8 H921.2 V596.5" fill="none" stroke="#fff" stroke-width="1.4" stroke-linejoin="round"/>
<path d="M757,836 L748.3,828 A11,11 0 1 1 765.7,828 Z" fill="#f4511e"/>
<circle cx="756.6" cy="822.5" r="3.6" fill="#fff"/>
<g transform="translate(824,785) scale(1.0)"><path d="M0,0 C0,-1.5 2.5,-1.5 2.5,0 V6 C2.5,5 5,5 5,6.5 C5,5.5 7.5,5.5 7.5,7 C7.5,6 10,6 10,7.5 V12 C10,15 8.5,17 7.5,18 H1.5 C0,16 -2,14 -3.5,11.5 C-4.5,10 -3,8.8 -1.8,9.8 L0,11.5 Z" fill="#fff" stroke="#111" stroke-width="1.1" stroke-linejoin="round"/><path d="M2.5,6 V11 M5,6.5 V11 M7.5,7 V11" stroke="#111" stroke-width="0.9"/></g>
<g transform="translate(913.5,653.5) scale(1.0)"><path d="M0,0 C0,-1.5 2.5,-1.5 2.5,0 V6 C2.5,5 5,5 5,6.5 C5,5.5 7.5,5.5 7.5,7 C7.5,6 10,6 10,7.5 V12 C10,15 8.5,17 7.5,18 H1.5 C0,16 -2,14 -3.5,11.5 C-4.5,10 -3,8.8 -1.8,9.8 L0,11.5 Z" fill="#fff" stroke="#111" stroke-width="1.1" stroke-linejoin="round"/><path d="M2.5,6 V11 M5,6.5 V11 M7.5,7 V11" stroke="#111" stroke-width="0.9"/></g>
</svg>
<!-- MAP CONTROLS -->
<div class="a" style="left:435px;top:499px;width:40px;height:90px;background:rgba(249,249,249,0.88);border-radius:3px;box-shadow:0 1px 2px rgba(0,0,0,0.18)"></div>
<div class="a" style="left:435px;top:600px;width:40px;height:59px;background:rgba(249,249,249,0.88);border-radius:3px;box-shadow:0 1px 2px rgba(0,0,0,0.18)"></div>
<div class="a" style="left:1282px;top:499px;width:40px;height:60px;background:rgba(249,249,249,0.92);border-radius:3px;box-shadow:0 1px 2px rgba(0,0,0,0.18)"></div>
<svg class="a" style="left:0;top:0;z-index:4" width="1440" height="1106" fill="none" stroke="#6b7f93">
 <path d="M436,528.5 H474 M436,559.5 H474 M436,629 H474 M1283,528.5 H1321" stroke="#e3e6e8" stroke-width="1"/>
 <circle cx="458.3" cy="511.2" r="6.6" stroke-width="1.2"/>
 <path d="M453.6,516 L450.8,518.8" stroke-width="1.2"/>
 <path d="M450.3,517.3 L452.2,519.2 L447.6,523.8 C447,524.4 446,524.4 445.4,523.8 C444.8,523.2 444.8,522.2 445.4,521.6 Z" stroke-width="1.1"/>
 <rect x="446.5" y="535.5" width="15.5" height="15" rx="1" stroke-width="1.1" stroke-dasharray="2.6,2"/>
 <path d="M456.5,542.7 L465,550 L457.4,553.5 Z" fill="#f6f7f8" stroke="#9aa7b3" stroke-width="1.1" stroke-linejoin="round"/>
 <circle cx="454.6" cy="575" r="8.8" stroke-width="0.9" stroke-dasharray="1.8,1.4"/>
 <circle cx="454.6" cy="575" r="3" stroke-width="1.1"/>
 <path d="M454.6,568.5 V570 M454.6,580 V581.5 M448,575 H449.6 M459.6,575 H461.2" stroke-width="1.1"/>
 <path d="M448.5,613.2 H461.3 M454.9,606.8 V619.6 M448.5,643.5 H461.3" stroke-width="2"/>
 <path d="M1301.6,504 C1296,504 1292,508 1292,512.5 C1292,515 1294.5,514.5 1296,515 C1297.5,515.5 1297,518 1297.5,520 C1298,522.5 1300,523 1302,523 C1307,523 1311,518.5 1311,513.5 C1311,508 1307,504 1301.6,504 Z" stroke-width="0.8"/>
 <circle cx="1301.8" cy="507.5" r="1.2" stroke-width="0.7"/><circle cx="1297.2" cy="510.5" r="1.2" stroke-width="0.7"/><circle cx="1306.8" cy="510.5" r="1.2" stroke-width="0.7"/><circle cx="1307" cy="516" r="1.2" stroke-width="0.7"/><circle cx="1301.5" cy="519.5" r="1.2" stroke-width="0.7"/>
 <path d="M1292.1,538 H1312 M1296,543 H1308 M1300.2,548 H1304" stroke-width="1.9"/>
</svg>
<div class="a" style="left:1291px;top:569.6px;width:23px;height:23px;border-radius:50%;background:radial-gradient(circle at 30% 25%,#4d5862 0%,#4f5a64 45%,#7d868d 85%,#98a0a5 100%);z-index:4"></div>

<!-- LEFT PANEL -->
<div class="t b" style="left:153px;top:122px;font-size:25px;color:#25323c">User Overview</div>
<div class="t" style="left:168px;top:178px;font-size:13px;color:#56636e">Trips</div>
<div class="t" style="left:216px;top:178px;font-size:13px;color:#333f48">Events</div>
<div class="t" style="left:273px;top:178px;font-size:13px;color:#333f48">JSON</div>
<div class="a" style="left:153px;top:197px;width:224px;height:1px;background:#eceff1"></div>
<div class="a" style="left:214px;top:194px;width:41px;height:3px;background:#fdc912"></div>
<div class="a" style="left:153px;top:208px;width:2px;height:16px;background:#fdc912"></div>
<div class="t b" style="left:163px;top:211px;font-size:12.4px;color:#25323c">November 2020</div>
<div class="a" style="left:163px;top:234px;width:204px;height:330px;border:1px solid #dde2e6;background:#fff"></div>
<div class="t b" style="left:173px;top:247px;font-size:12.7px;color:#25323c">Monday, 9th Nov</div>
<div class="t" style="left:173px;top:270px;font-size:9.5px;color:#b8bec4">Trips Overview</div>
<div class="t" style="left:174px;top:295px;font-size:12.4px;color:#333f48">Trip 1710 hrs</div>
<div class="a" style="left:164px;top:318px;width:202px;height:178px;background:#fef9e8"></div>
<div class="a" style="left:164px;top:495px;width:202px;height:1px;background:#e6e9ec"></div>
<div class="a" style="left:189px;top:351px;width:1px;height:112px;background:#c5ccd2"></div>
<div class="a" style="left:181.5px;top:335.5px;width:16px;height:16px;border:2px solid #fdc912;border-radius:50%;background:#fef9e8"></div>
<div class="a" style="left:181.5px;top:377.5px;width:16px;height:16px;border:2px solid #25323c;border-radius:50%;background:#fef9e8"></div>
<div class="a" style="left:174px;top:412px;width:30px;height:30px;border:2.5px solid #a38b1e;border-radius:50%;background:#fef9e8"></div>
<div class="a" style="left:181.5px;top:461.5px;width:16px;height:16px;border:2px solid #fdc912;border-radius:50%;background:#fef9e8"></div>
<div class="t b" style="left:217px;top:338px;font-size:12.6px;color:#6b7f93">Start</div>
<div class="t" style="left:280px;top:339px;font-size:10.5px;color:#8696a4">1710 hrs</div>
<div class="t b" style="left:217px;top:372px;font-size:12.6px;color:#6b7f93;line-height:15.5px">Camera<br>Event</div>
<div class="t" style="left:280px;top:380px;font-size:10.5px;color:#8696a4">1715 hrs</div>
<div class="t b" style="left:217px;top:421px;font-size:12.6px;color:#25323c">Route</div>
<div class="t b" style="left:280px;top:423.5px;font-size:10px;color:#25323c">1718 hrs</div>
<div class="t b" style="left:217px;top:463px;font-size:12.6px;color:#6b7f93">Stop</div>
<div class="t" style="left:280px;top:465px;font-size:10.5px;color:#8696a4">1740 hrs</div>
<div class="t" style="left:174px;top:512px;font-size:12.4px;color:#7d8e9c">Trip # 0950 hrs</div>
<div class="t b" style="left:196px;top:539px;font-size:11.5px;color:#a38a1a">05</div>
<div class="t" style="left:212px;top:540px;font-size:9.5px;color:#b7bec5">#  events in this trip</div>
<div class="a" style="left:225px;top:584px;width:81px;height:32px;border:1px solid #25323c;border-radius:4px;font-size:12.5px;color:#25323c;text-align:center;line-height:30px">Clear Filter</div>
<svg class="a" style="left:0;top:0;z-index:6" width="1440" height="1106" fill="none" stroke-linecap="round" stroke-linejoin="round">
 <path d="M351,180.5 H371 M354.5,186 H367.5 M359,191.5 H363" stroke="#aab5be" stroke-width="1.6" stroke-linecap="butt"/>
 <circle cx="360" cy="215.5" r="7" stroke="#fdc912" stroke-width="1.4"/>
 <path d="M356.5,215.5 H363.5" stroke="#25323c" stroke-width="1.2"/>
 <path d="M344.5,304 L350,298 L355.5,304" stroke="#25323c" stroke-width="1.2"/>
 <path d="M344.5,423 L350,428 L344.5,433" stroke="#25323c" stroke-width="1.2"/>
 <path d="M344.5,515.5 L350,521 L355.5,515.5" stroke="#7d8e9c" stroke-width="1.2"/>
 <g stroke="#a38b1e" stroke-width="1">
  <path d="M180,430 L180,426.5 C180,425 182,424.5 183.5,424 L186,421.5 C187,420.5 189,420.5 193,420.5 C195,420.5 196,421.5 197,423.5 C198.5,424 199,425 199,427 L199,430 H197 M193.5,430 H185 M182,430 H180"/>
  <circle cx="183.5" cy="430.5" r="1.8"/><circle cx="195.2" cy="430.5" r="1.8"/>
  <path d="M184,424 H197 M189,421 V424"/>
 </g>
 <g stroke="#c5ccd2" stroke-width="1">
  <path d="M176.5,547 V544.5 C176.5,543.5 178,543 179,542.7 L181,540.8 C181.8,540.2 183,540.2 186,540.2 C187.5,540.2 188.3,541 189,542.5 C190,543 190.5,543.5 190.5,545 V547 H189 M186,547 H180.5 M178,547 H176.5"/>
  <circle cx="179.2" cy="547.3" r="1.4"/><circle cx="187.6" cy="547.3" r="1.4"/>
 </g>
</svg>

<!-- ICON OVERLAY -->
<svg class="a" style="left:0;top:0;z-index:5" width="1440" height="1106" viewBox="0 0 1440 1106" fill="none" stroke="#6b7f93" stroke-width="1.4" stroke-linecap="round" stroke-linejoin="round">
 <!-- pin -->
 <g transform="translate(50,100)">
  <path d="M14.6,21.5 A8.1,8.1 0 1 1 26.2,21.5 L20.4,27.8 Z"/>
  <circle cx="20.4" cy="15.4" r="4.8"/>
  <path d="M15.8,24 A14.2,6 0 1 0 25,24"/>
  <path d="M16.6,26.4 A8.4,2.7 0 1 0 24.2,26.4"/>
 </g>
 <!-- map search -->
 <g transform="translate(50,170)">
  <path d="M24.6,14.2 V6.3 L18.4,8.7 L11.6,6.5 L5.4,8.7 V34.7 L11.6,31.8 L18.4,34.4 L24.6,32.2 V27.6"/>
  <path d="M11.6,6.8 V23.5 M11.6,26.5 V31.5 M18.4,9 V14 M18.4,28 V34 M7.5,10.3 V11 M7.5,13.3 V20.7" stroke-width="1.2"/>
  <circle cx="21.3" cy="21" r="6.6"/>
  <circle cx="21.3" cy="21" r="4.5"/>
  <path d="M18.3,19.8 A3.2,3.2 0 0 1 21.2,18" stroke-width="1"/>
  <path d="M25.9,25.3 L27.3,26.7 M26.3,28.2 L28.8,25.7 L33.8,30.7 L31.3,33.2 Z"/>
 </g>
 <!-- wheel -->
 <g transform="translate(50,240)" stroke-width="1.5">
  <circle cx="20.4" cy="19.4" r="13.8"/>
  <path d="M10.6,16.6 A10.5,10.5 0 0 1 30.2,16.6 Z"/>
  <circle cx="20.4" cy="21" r="1.9" stroke-width="1.3"/>
  <path d="M10.2,19.4 C15,19.6 18.6,24 18.6,29.8 C14,29 10.4,25 10.2,19.4 Z"/>
  <path d="M30.6,19.4 C25.8,19.6 22.2,24 22.2,29.8 C26.8,29 30.4,25 30.6,19.4 Z"/>
 </g>
 <!-- user (yellow) -->
 <g transform="translate(50,309)" stroke="#fdc912" stroke-width="1.5">
  <rect x="6.1" y="5.8" width="28" height="28.2" rx="3"/>
  <circle cx="19.9" cy="16.9" r="5.4"/>
  <path d="M12.4,34 C9.8,32.6 10.4,28.6 13,28.2 C15.5,27.8 17.8,25.8 20.3,25.8 C22.8,25.8 25,27.8 27.5,28.2 C30.2,28.6 30.6,32.6 28,34"/>
 </g>
 <!-- chart -->
 <g transform="translate(50,378)" stroke-width="1.4" stroke-linecap="butt" stroke-linejoin="miter">
  <rect x="6.7" y="24.9" width="4.4" height="9.3"/>
  <rect x="14.1" y="15.7" width="4.4" height="18.5"/>
  <rect x="21.9" y="21.5" width="4.4" height="12.7"/>
  <rect x="29.6" y="15.7" width="4.4" height="18.5"/>
  <path d="M6.7,18.1 L16.5,8.3 L23.9,15.9 L33.3,6.5" stroke-width="1.6"/>
  <path d="M28.4,6.3 H33.8 V11.6" stroke-width="1.6"/>
 </g>
 <!-- clock -->
 <g transform="translate(50,448)" stroke-width="1.6">
  <path d="M34.2,19.4 A14.1,14.1 0 1 1 27.4,7.4"/>
  <path d="M25.3,9.9 L30,5.1 L30,10.5 Z" fill="#6b7f93"/>
  <path d="M19.9,13.4 V19.7 H26"/>
 </g>
 <!-- rss -->
 <g transform="translate(50,515)" stroke-width="1.3">
  <circle cx="10.5" cy="29.3" r="2.8"/>
  <path d="M7.6,16.8 A15,15 0 0 1 22.8,31.8 L19.7,31.8 A12,12 0 0 0 7.6,19.9 Z"/>
  <path d="M7.6,8.5 A23.3,23.3 0 0 1 31.2,31.6 L27.8,31.6 A19.8,19.8 0 0 0 7.6,11.9 Z"/>
 </g>
 <!-- gear -->
 <path stroke-width="1.4" d="M67.34,592.31 L67.71,588.77 L72.09,588.77 L72.46,592.31 L75.36,593.51 L78.13,591.27 L81.23,594.37 L78.99,597.14 L80.19,600.04 L83.73,600.41 L83.73,604.79 L80.19,605.16 L78.99,608.06 L81.23,610.83 L78.13,613.93 L75.36,611.69 L72.46,612.89 L72.09,616.43 L67.71,616.43 L67.34,612.89 L64.44,611.69 L61.67,613.93 L58.57,610.83 L60.81,608.06 L59.61,605.16 L56.07,604.79 L56.07,600.41 L59.61,600.04 L60.81,597.14 L58.57,594.37 L61.67,591.27 L64.44,593.51Z"/>
 <circle cx="69.9" cy="602.6" r="5.6" stroke-width="1.4"/>
 <!-- header icons -->
 <g transform="translate(718,36)" stroke="#75879a" stroke-width="1.7" stroke-linejoin="miter">
  <path d="M7.1,7.1 H24.3 L27,9.8 V26.8 H7.1 Z"/>
  <path d="M10.6,7.1 V13 H22.3 V7.1"/>
  <path d="M10.6,26.8 V18.3 H23.6 V26.8"/>
  <path d="M60.3,26.8 V7.1 H67.6 L68.3,8.4 H81.6 V10.9"/>
  <path d="M60.3,26.8 L62.6,11 H85.6 L83.6,26.8 Z"/>
  <path d="M134.2,16 A9.3,9.3 0 1 1 132.6,10.6" stroke-width="1.3"/>
  <path d="M128.8,10.4 L134.3,12.6 L135.4,7.2" stroke-width="1.3" stroke-linejoin="round"/>
 </g>
</svg>

</body></html>
